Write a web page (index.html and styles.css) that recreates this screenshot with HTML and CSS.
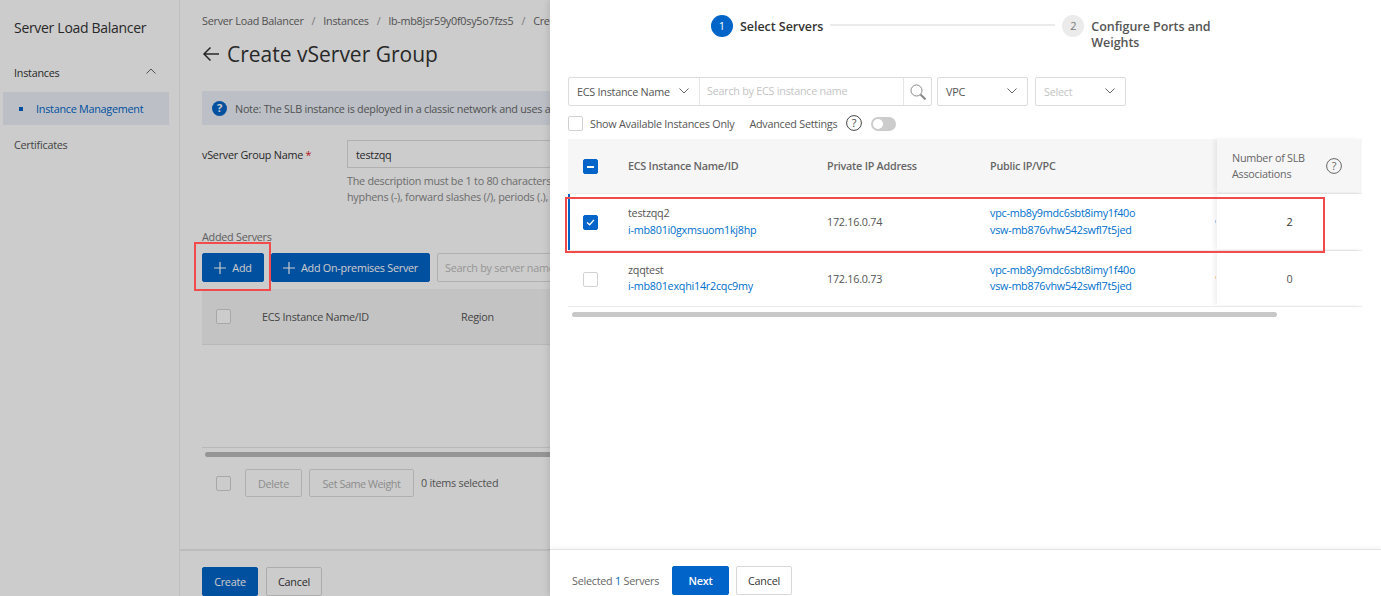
FILE: index.html
```html
<!DOCTYPE html>
<html lang="en">
<head>
<meta charset="utf-8">
<title>Create vServer Group</title>
<link rel="stylesheet" href="styles.css">
</head>
<body>
<div class="page">
  <aside class="sidebar">
    <div class="side-title">Server Load Balancer</div>
    <div class="side-group">
      <span>Instances</span>
      <svg class="side-caret" viewBox="0 0 12 8" width="12" height="8"><path d="M1.5 6.5 6 2l4.5 4.5" fill="none" stroke="#666" stroke-width="1"/></svg>
    </div>
    <div class="side-active"><i class="side-dot"></i><span>Instance Management</span></div>
    <div class="side-item">Certificates</div>
  </aside>
  <main class="main">
    <div class="content">
      <nav class="crumbs"><span>Server Load Balancer</span><em>/</em><span>Instances</span><em>/</em><span>lb-mb8jsr59y0f0sy5o7fzs5</span><em>/</em><span>Create vServer Group</span></nav>
      <h1 class="title">
        <svg viewBox="0 0 18 16" width="18" height="16"><path d="M17 8H2M8.5 1.500 2 8l6.500 6.500" fill="none" stroke="#333" stroke-width="1.500"/></svg>
        <span>Create vServer Group</span>
      </h1>
      <div class="note">
        <svg viewBox="0 0 16 16" width="15" height="15"><circle cx="8" cy="8" r="8" fill="#0064c8"/><text x="8" y="12" text-anchor="middle" class="note-q">?</text></svg>
        <span>Note: The SLB instance is deployed in a classic network and uses a shared instance type that is not available for vServer groups.</span>
      </div>
      <div class="form-row">
        <label class="form-label">vServer Group Name <b>*</b></label>
        <div class="form-field">
          <div class="text-input">testzqq</div>
          <p class="help">The description must be 1 to 80 characters in length and can contain letters, digits,<br>hyphens (-), forward slashes (/), periods (.), and underscores (_).</p>
        </div>
      </div>
      <div class="added">Added Servers</div>
      <div class="actions">
        <button class="btn primary add"><svg viewBox="0 0 12 12" width="12" height="12"><path d="M6 0v12M0 6h12" stroke="#fff" stroke-width="1.200"/></svg>Add</button>
        <button class="btn primary onprem"><svg viewBox="0 0 12 12" width="12" height="12"><path d="M6 0v12M0 6h12" stroke="#fff" stroke-width="1.200"/></svg>Add On-premises Server</button>
        <div class="server-search">Search by server name</div>
      </div>
      <div class="added-head">
        <i class="check"></i>
        <span class="col-name">ECS Instance Name/ID</span>
        <span>Region</span>
      </div>
      <div class="added-body"></div>
      <div class="bar-track"><div class="bar-thumb"></div></div>
      <div class="bulk">
        <i class="check"></i>
        <button class="btn disabled del">Delete</button>
        <button class="btn disabled weight">Set Same Weight</button>
        <span class="bulk-count">0 items selected</span>
      </div>
    </div>
    <footer class="main-foot">
      <button class="btn primary create">Create</button>
      <button class="btn ghost cancel-a">Cancel</button>
    </footer>
  </main>
</div>
<div class="mask"></div>
<div class="mark mark-add"></div>

<section class="drawer">
  <div class="steps">
    <span class="step-num on">1</span>
    <span class="step-label one">Select Servers</span>
    <span class="step-line"></span>
    <span class="step-num">2</span>
    <span class="step-label two">Configure Ports and Weights</span>
  </div>
  <div class="filters">
    <div class="combo">
      <div class="combo-select"><span>ECS Instance Name</span>
        <svg viewBox="0 0 10 6" width="10" height="6"><path d="M.5.5 5 5 9.500.5" fill="none" stroke="#666"/></svg></div>
      <div class="combo-input">Search by ECS instance name</div>
      <div class="combo-btn"><svg viewBox="0 0 16 16" width="16" height="16"><circle cx="6.500" cy="6.500" r="5.500" fill="none" stroke="#888" stroke-width="1"/><path d="m10.500 10.500 5 5" stroke="#888" stroke-width="2"/></svg></div>
    </div>
    <div class="pick vpc"><span>VPC</span><svg viewBox="0 0 10 6" width="10" height="6"><path d="M.5.5 5 5 9.500.5" fill="none" stroke="#666"/></svg></div>
    <div class="pick sel"><span>Select</span><svg viewBox="0 0 10 6" width="10" height="6"><path d="M.5.5 5 5 9.500.5" fill="none" stroke="#666"/></svg></div>
  </div>
  <div class="options">
    <i class="check big"></i>
    <span class="opt-avail">Show Available Instances Only</span>
    <span class="opt-adv">Advanced Settings</span>
    <svg class="help-ic" viewBox="0 0 16 16" width="16" height="16"><circle cx="8" cy="8" r="7.400" fill="none" stroke="#444" stroke-width="1"/><text x="8" y="11.800" text-anchor="middle" class="q">?</text></svg>
    <span class="toggle"><i></i></span>
  </div>
  <div class="table">
    <div class="trow thead">
      <span class="c-check"><i class="check blue minus"></i></span>
      <span class="c-name">ECS Instance Name/ID</span>
      <span class="c-ip">Private IP Address</span>
      <span class="c-pub">Public IP/VPC</span>
      <span class="c-fixed head-fixed"><span class="fixed-text">Number of SLB Associations</span>
        <svg viewBox="0 0 16 16" width="16" height="16"><circle cx="8" cy="8" r="7.400" fill="none" stroke="#666" stroke-width="1"/><text x="8" y="11.800" text-anchor="middle" class="q grey">?</text></svg></span>
    </div>
    <div class="trow tbody selected">
      <span class="c-check"><i class="check blue tick"><svg viewBox="0 0 10 8" width="9" height="7"><path d="m1 4 3 2.500L9 1" fill="none" stroke="#fff" stroke-width="1.600"/></svg></i></span>
      <span class="c-name">testzqq2<a>i-mb801i0gxmsuom1kj8hp</a></span>
      <span class="c-ip">172.16.0.74</span>
      <span class="c-pub"><a>vpc-mb8y9mdc6sbt8imy1f40o</a><a>vsw-mb876vhw542swfl7t5jed</a></span>
      <span class="c-fixed num dark"><i class="sliver running"></i>2</span>
    </div>
    <div class="trow tbody">
      <span class="c-check"><i class="check"></i></span>
      <span class="c-name">zqqtest<a>i-mb801exqhi14r2cqc9my</a></span>
      <span class="c-ip">172.16.0.73</span>
      <span class="c-pub"><a>vpc-mb8y9mdc6sbt8imy1f40o</a><a>vsw-mb876vhw542swfl7t5jed</a></span>
      <span class="c-fixed num"><i class="sliver stopped"></i>0</span>
    </div>
    <div class="mark mark-row"></div>
  </div>
  <div class="hscroll"><div class="hthumb"></div></div>
  <footer class="drawer-foot">
    <span class="selected-count">Selected <b>1</b> Servers</span>
    <button class="btn strong next">Next</button>
    <button class="btn ghost cancel-b">Cancel</button>
  </footer>
</section>
</body>
</html>
```

FILE: styles.css
```css
* { box-sizing: border-box; }
html, body { margin: 0; height: 100%; overflow: hidden; }
body { font-family: "Open Sans", "Noto Sans", sans-serif; font-size: 10.800px; letter-spacing: -.25px; color: #333; background: #fff; position: relative; width: 1381px; height: 596px; }
i { display: block; font-style: normal; }
p, h1 { margin: 0; }
button { font: inherit; letter-spacing: inherit; padding: 0; cursor: pointer; }

.page { display: flex; width: 1381px; height: 596px; }
.sidebar { width: 180px; flex: none; border-right: 1px solid #f0f0f0; background: #fff; }
.side-title { font-size: 14px; letter-spacing: -.3px; line-height: 20px; padding: 18px 0 0 14px; color: #333; }
.side-group { display: flex; align-items: center; justify-content: space-between; height: 20px; margin-top: 24px; padding: 0 22px 0 14px; color: #333; }
.side-caret { margin-top: -3px; }
.side-active { display: flex; align-items: center; height: 33px; margin: 10px 10px 0 3px; padding-left: 16px; background: #ebf1f8; color: #0064c8; font-weight: 500; }
.side-dot { width: 4px; height: 4px; background: #0064c8; margin-right: 13px; }
.side-item { margin-top: 10px; padding-left: 14px; line-height: 20px; color: #555; }

.main { flex: 1; min-width: 0; display: flex; flex-direction: column; background: #fff; }
.content { flex: 1; padding: 13px 0 0 22px; min-height: 0; overflow: hidden; }
.crumbs { display: flex; gap: 8px; line-height: 16px; color: #666; white-space: nowrap; }
.crumbs em { font-style: normal; color: #999; }
.title { display: flex; align-items: center; gap: 7px; margin-top: 10px; font-size: 21px; letter-spacing: 0; line-height: 30px; font-weight: 500; color: #333; white-space: nowrap; }
.note { display: flex; align-items: center; gap: 8px; height: 34px; margin-top: 22px; padding-left: 10px; background: #ebf1f8; color: #666; white-space: nowrap; }
.note-q { font: 700 12px "Open Sans", sans-serif; fill: #fff; }
.form-row { display: flex; margin-top: 15px; }
.form-label { width: 145px; flex: none; line-height: 30px; color: #333; font-weight: 500; }
.form-label b { color: #e62222; font-weight: 400; }
.form-field { width: 600px; }
.text-input { height: 28px; border: 1px solid #ddd; padding-left: 8px; line-height: 27px; color: #333; }
.help { margin-top: 5px; line-height: 16px; color: #888; white-space: nowrap; }
.added { margin-top: 24px; line-height: 16px; color: #777; }
.actions { display: flex; gap: 7px; margin-top: 8px; height: 29px; }
.btn { display: inline-flex; align-items: center; justify-content: center; height: 29px; border-radius: 2px; border: 1px solid #e0e0e0; background: #fff; color: #333; white-space: nowrap; }
.btn.primary { background: #0064c8; border-color: #0064c8; color: #fff; }
.btn.primary svg { margin-right: 6px; }
.add { width: 62px; }
.onprem { width: 159px; }
.server-search { width: 300px; border: 1px solid #ddd; border-radius: 2px; padding-left: 7px; line-height: 27px; color: #bbb; white-space: nowrap; }
.check { width: 15px; height: 15px; flex: none; border: 1px solid #d2d2d2; border-radius: 2px; background: #fff; }
.added-head { display: flex; align-items: center; height: 56px; margin-top: 7px; padding-left: 14px; background: #f4f4f4; border-bottom: 1px solid #e6e6e6; color: #555; font-weight: 500; }
.col-name { width: 199px; margin-left: 31px; }
.added-body { height: 103px; border-bottom: 1px solid #e6e6e6; }
.bar-track { padding: 4px 0 0 3px; }
.bar-thumb { height: 5px; background: #bbb; border-radius: 3px; }
.bulk { display: flex; align-items: center; height: 28px; margin-top: 12px; padding-left: 14px; color: #666; }
.btn.disabled { height: 28px; color: #b0b0b0; border-color: #ddd; background: #fff; }
.del { width: 57px; margin-left: 14px; }
.weight { width: 105px; margin-left: 7px; letter-spacing: -.45px; }
.bulk-count { margin: -2px 0 0 7px; }
.main-foot { display: flex; gap: 8px; height: 47px; flex: none; padding: 16px 0 0 22px; border-top: 2px solid #ececec; }
.create { width: 56px; }
.btn.ghost { width: 56px; border-color: #d8d8d8; color: #333; }

.mask { position: absolute; inset: 0; background: rgba(0, 0, 0, .2); }
.mark { position: absolute; border: 2px solid #f34b4b; pointer-events: none; z-index: 3; }
.mark-add { left: 194px; top: 242px; width: 77px; height: 49px; }

.drawer { position: absolute; left: 550px; top: 0; right: 0; bottom: 0; display: flex; flex-direction: column; background: #fff; box-shadow: -2px 0 6px rgba(0, 0, 0, .1); }
.steps { display: flex; align-items: flex-start; height: 77px; padding: 15px 0 0 161px; }
.step-num { width: 22px; height: 22px; flex: none; border-radius: 50%; background: #ebebeb; color: #777; text-align: center; line-height: 22px; font-size: 11px; letter-spacing: 0; }
.step-num.on { background: #0064c8; color: #fff; }
.step-label { font-size: 12.500px; letter-spacing: -.05px; font-weight: 600; line-height: 16px; color: #333; margin: 4px 0 0 7px; }
.step-label.one { white-space: nowrap; }
.step-label.two { width: 125px; color: #555; }
.step-line { width: 225px; height: 2px; margin: 9px 7px 0; background: #ebebeb; }
.filters { display: flex; height: 29px; padding-left: 18px; color: #555; }
.combo { display: flex; width: 364px; border: 1px solid #dcdcdc; border-radius: 2px; }
.combo-select { display: flex; align-items: center; justify-content: space-between; width: 131px; padding: 0 10px 1px 8px; border-right: 1px solid #e6e6e6; white-space: nowrap; }
.combo-input { width: 203px; padding-left: 7px; line-height: 26px; color: #c4c4c4; white-space: nowrap; }
.combo-btn { flex: 1; display: flex; align-items: center; justify-content: center; border-left: 1px solid #e6e6e6; }
.pick { display: flex; align-items: center; justify-content: space-between; height: 29px; border: 1px solid #dcdcdc; border-radius: 2px; padding: 0 10px 1px 8px; }
.vpc { width: 91px; margin-left: 5px; }
.sel { width: 91px; margin-left: 7px; color: #c4c4c4; }
.options { display: flex; align-items: center; height: 16px; margin-top: 9px; padding-left: 18px; color: #555; }
.check.big { width: 15px; height: 15px; }
.opt-avail { margin-left: 7px; }
.opt-adv { margin-left: 15px; }
.help-ic { margin-left: 9px; }
.q { font: 400 11px "Open Sans", sans-serif; fill: #444; }
.q.grey { fill: #666; }
.toggle { display: block; width: 25px; height: 14px; margin: 2px 0 0 9px; border-radius: 7px; background: #ccc; padding: 2px; }
.toggle i { width: 10px; height: 10px; border-radius: 50%; background: #fff; }

.table { position: relative; margin: 8px 19px 0 18px; }
.trow { display: grid; grid-template-columns: 60px 199px 163px 227px 145px; border-bottom: 1px solid #ececec; align-items: center; }
.trow > span { display: block; }
.thead { height: 55px; background: #f6f6f6; color: #666; font-weight: 600; padding-bottom: 1px; }
.tbody { height: 57px; color: #555; line-height: 16.500px; padding-bottom: 1px; }
.tbody + .tbody { height: 56px; }
.tbody a { display: block; color: #0070cc; }
.selected { box-shadow: inset 2px 0 0 #0064c8; }
.c-check { padding: 2px 0 0 15px; }
.tbody .c-ip { padding-top: 2px; }
.check.blue { position: relative; background: #0064c8; border-color: #0064c8; display: flex; align-items: center; justify-content: center; }
.minus::after { content: ""; width: 7px; height: 2px; background: #fff; }
.c-fixed { height: 100%; position: relative; box-shadow: -3px 0 4px rgba(0, 0, 0, .06); }
.head-fixed { display: flex !important; align-items: center; padding: 0 20px 0 15px; background: #f6f6f6; line-height: 16px; }
.fixed-text { width: 94px; flex: none; font-weight: 500; }
.num { display: flex !important; align-items: center; justify-content: center; padding-top: 2px; color: #555; background: #fff; }
.num.dark { color: #333; }
.sliver { position: absolute; left: -2px; top: 50%; width: 1px; height: 3px; margin-top: -2px; }
.sliver.running { background: #a8c4e6; }
.sliver.stopped { background: #f0cfa8; }
.mark-row { left: -3px; top: 58px; width: 760px; height: 56px; }
.hscroll { margin: 5px 0 0 22px; }
.hthumb { width: 705px; height: 5px; border-radius: 3px; background: #c8c8c8; }
.drawer-foot { display: flex; align-items: flex-start; margin-top: auto; height: 47px; padding: 16px 0 0 22px; border-top: 1px solid #e4e4e4; box-shadow: 0 -2px 4px rgba(0, 0, 0, .04); color: #666; }
.selected-count { width: 100px; line-height: 29px; white-space: nowrap; }
.selected-count b { color: #0064c8; font-weight: 500; }
.btn.strong { width: 57px; background: #0064c8; border-color: #0064c8; color: #fff; font-weight: 600; }
.cancel-b { margin-left: 7px; }
```
